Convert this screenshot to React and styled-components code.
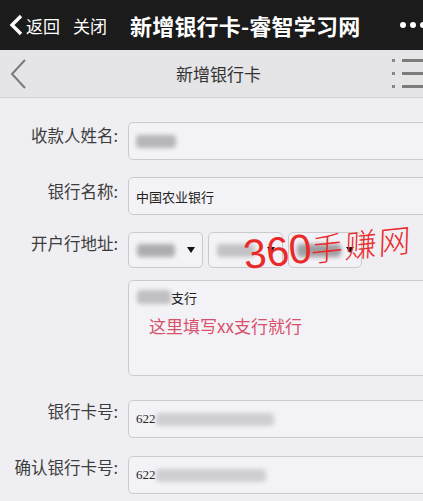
import React from 'react'
import styled, { createGlobalStyle } from 'styled-components'

const Global = createGlobalStyle`
  html, body { margin: 0; padding: 0; }
  body {
    background: #efeef3;
    font-family: "Noto Sans CJK SC", "Noto Sans", sans-serif;
    overflow: hidden;
  }
`

const Page = styled.div`
  position: relative;
  width: 423px;
  height: 501px;
  overflow: hidden;
  background: #efeef3;
`

// 顶部黑色栏
const TopBar = styled.div`
  height: 50px;
  background: #1b1b1b;
  color: #fff;
  display: flex;
  align-items: center;
  padding-left: 8px;
`

const TopLink = styled.span`
  font-size: 17px;
  margin-right: ${p => p.gap || 0}px;
  display: flex;
  align-items: center;
`

const TopTitle = styled.span`
  font-size: 22px;
  font-weight: bold;
  letter-spacing: 0.2px;
  margin-left: 3px;
`

const Dots = styled.div`
  margin-left: auto;
  display: flex;
  gap: 4px;
  margin-right: -3px;
  span {
    width: 6px;
    height: 6px;
    border-radius: 50%;
    background: #fff;
  }
`

// 第二栏
const NavBar = styled.div`
  height: 47px;
  background: #e5e4e6;
  border-bottom: 1px solid #cfcfd2;
  display: flex;
  align-items: center;
  position: relative;
`

const NavTitle = styled.div`
  position: absolute;
  left: 0;
  right: 0;
  text-align: center;
  font-size: 17px;
  color: #333;
  padding-left: 14px;
`

const NavBack = styled.div`
  margin-left: 9px;
  display: flex;
`

const MenuIcon = styled.div`
  margin-left: auto;
  display: flex;
  flex-direction: column;
  gap: 10px;
  margin-right: -4px;
`

const MenuLine = styled.div`
  display: flex;
  align-items: center;
  gap: 7px;
  &::before {
    content: '';
    width: 3px;
    height: 3px;
    background: #888;
  }
  &::after {
    content: '';
    width: 25px;
    height: 3px;
    background: #7b7b7b;
  }
`

// 表单
const Form = styled.div`
  padding-top: 24px;
`

const Row = styled.div`
  display: flex;
  align-items: flex-start;
  margin-top: ${p => p.mt || 0}px;
`

const Label = styled.div`
  width: 128px;
  flex: none;
  text-align: right;
  font-size: 16.5px;
  line-height: 26px;
  color: #3d3d3d;
  padding-right: 10px;
  box-sizing: border-box;
  margin-top: ${p => p.off || 0}px;
`

const Input = styled.div`
  flex: none;
  width: 310px;
  height: ${p => p.h || 38}px;
  box-sizing: border-box;
  border: 1px solid #cacacd;
  border-radius: 5px;
  background: #f3f2f6;
  padding: ${p => (p.top ? '7px 8px' : '0 7px')};
  display: flex;
  flex-direction: column;
  justify-content: ${p => (p.top ? 'flex-start' : 'center')};
  font-size: 13px;
  color: #222;
`

const Line = styled.div`
  display: flex;
  align-items: center;
  height: 18px;
  font-family: ${p => (p.serif ? '"Liberation Serif", serif' : 'inherit')};
`

const Blur = styled.span`
  display: inline-block;
  width: ${p => p.w}px;
  height: ${p => p.h || 14}px;
  background: ${p => p.c || '#b6b5b9'};
  filter: blur(2px);
  border-radius: 4px;
  margin-left: ${p => p.ml || 0}px;
`

const Selects = styled.div`
  display: flex;
  gap: 5px;
`

const Select = styled.div`
  width: ${p => p.w}px;
  height: 36px;
  box-sizing: border-box;
  border: 1px solid #cacacd;
  border-radius: 5px;
  background: #f3f2f6;
  display: flex;
  align-items: center;
  padding: 0 7px 0 8px;
  &::after {
    content: '';
    margin-left: auto;
    border-left: 4px solid transparent;
    border-right: 4px solid transparent;
    border-top: 6px solid #111;
  }
`

const Hint = styled.div`
  color: #d9506a;
  font-size: 17px;
  margin: 7px 0 0 12px;
`

const Mark = styled.div`
  position: absolute;
  left: 246px;
  top: 232px;
  color: #ea2a2a;
  display: flex;
  align-items: baseline;
  transform: rotate(-6deg);
  transform-origin: left bottom;
`

const MarkNum = styled.span`
  font-family: "Liberation Sans", sans-serif;
  font-size: 41px;
`

const MarkText = styled.span`
  font-size: 32px;
  font-weight: 300;
  letter-spacing: 2px;
  transform: skewX(-8deg);
  display: inline-block;
`

export default function App() {
  return (
    <Page>
      <Global />
      <TopBar>
        <TopLink gap={13}>
          <svg width="18" height="22" viewBox="0 0 18 22">
            <path d="M13 2 L4 11 L13 20" fill="none" stroke="#fff" strokeWidth="3.4" />
          </svg>
          返回
        </TopLink>
        <TopLink gap={20}>关闭</TopLink>
        <TopTitle>新增银行卡-睿智学习网</TopTitle>
        <Dots>
          <span />
          <span />
          <span />
        </Dots>
      </TopBar>

      <NavBar>
        <NavBack>
          <svg width="18" height="30" viewBox="0 0 18 30">
            <path d="M16 1 L3 15 L16 29" fill="none" stroke="#7a7a7a" strokeWidth="2" />
          </svg>
        </NavBack>
        <NavTitle>新增银行卡</NavTitle>
        <MenuIcon>
          <MenuLine />
          <MenuLine />
          <MenuLine />
        </MenuIcon>
      </NavBar>

      <Form>
        <Row>
          <Label off={0}>收款人姓名:</Label>
          <Input>
            <Line>
              <Blur w={40} h={13} />
            </Line>
          </Input>
        </Row>

        <Row mt={17}>
          <Label off={1}>银行名称:</Label>
          <Input>中国农业银行</Input>
        </Row>

        <Row mt={17}>
          <Label off={-2}>开户行地址:</Label>
          <Selects>
            <Select w={75}>
              <Blur w={38} h={13} c="#aeadb1" />
            </Select>
            <Select w={75}>
              <Blur w={38} h={13} c="#c2c1c5" />
            </Select>
            <Select w={74}>
              <Blur w={44} h={13} c="#9f9ea2" />
            </Select>
          </Selects>
        </Row>

        <Row mt={12}>
          <Label />
          <Input h={96} top>
            <Line>
              <Blur w={34} h={14} c="#c0bfc3" />
              支行
            </Line>
            <Hint>这里填写xx支行就行</Hint>
          </Input>
        </Row>

        <Row mt={24}>
          <Label off={-2}>银行卡号:</Label>
          <Input>
            <Line serif>
              622
              <Blur w={118} h={13} c="#cfced2" />
            </Line>
          </Input>
        </Row>

        <Row mt={18}>
          <Label off={-2}>确认银行卡号:</Label>
          <Input>
            <Line serif>
              622
              <Blur w={110} h={13} c="#cfced2" />
            </Line>
          </Input>
        </Row>
      </Form>

      <Mark>
        <MarkNum>360</MarkNum>
        <MarkText>手赚网</MarkText>
      </Mark>
    </Page>
  )
}
